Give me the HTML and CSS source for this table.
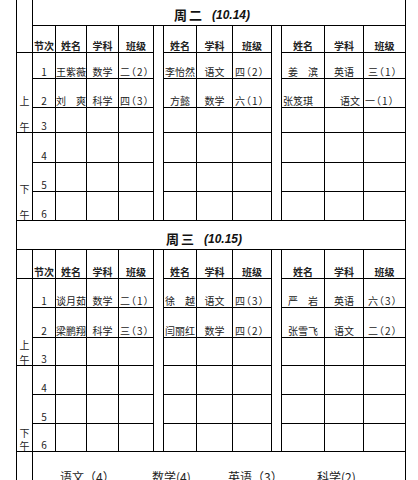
FILE: index.html
```html
<!DOCTYPE html>
<html lang="zh">
<head>
<meta charset="utf-8">
<title>课表</title>
<link rel="stylesheet" href="styles.css">
</head>
<body>
<div class="sheet">
  <div class="lt"></div>
  <div class="title t1"><span class="tz">周二</span><span class="td">(10.14)</span></div>
  <div class="gap g1a"></div><div class="gap g1b"></div>
  <div class="half am1"><span>上</span><span>午</span></div>
  <div class="half pm1"><span>下</span><span>午</span></div>

  <div class="c hd">节次</div><div class="c hd">姓名</div><div class="c hd">学科</div><div class="c hd">班级</div>
  <div class="c hd">姓名</div><div class="c hd">学科</div><div class="c hd">班级</div>
  <div class="c hd">姓名</div><div class="c hd">学科</div><div class="c hd">班级</div>

  <div class="c">1</div><div class="c">王紫薇</div><div class="c">数学</div><div class="c l cls">二（2）</div>
  <div class="c">李怡然</div><div class="c">语文</div><div class="c l l2 cls">四（2）</div>
  <div class="c">姜　滨</div><div class="c">英语</div><div class="c l l4 cls">三（1）</div>

  <div class="c">2</div><div class="c">刘　爽</div><div class="c">科学</div><div class="c l cls">四（3）</div>
  <div class="c">方懿</div><div class="c">数学</div><div class="c l l2 cls">六（1）</div>
  <div class="c l">张笈琪</div><div class="c r">语文</div><div class="c l cls">一（1）</div>

  <div class="c">3</div><div class="c"></div><div class="c"></div><div class="c"></div><div class="c"></div><div class="c"></div><div class="c"></div><div class="c"></div><div class="c"></div><div class="c"></div>
  <div class="c">4</div><div class="c"></div><div class="c"></div><div class="c"></div><div class="c"></div><div class="c"></div><div class="c"></div><div class="c"></div><div class="c"></div><div class="c"></div>
  <div class="c">5</div><div class="c"></div><div class="c"></div><div class="c"></div><div class="c"></div><div class="c"></div><div class="c"></div><div class="c"></div><div class="c"></div><div class="c"></div>
  <div class="c">6</div><div class="c"></div><div class="c"></div><div class="c"></div><div class="c"></div><div class="c"></div><div class="c"></div><div class="c"></div><div class="c"></div><div class="c"></div>

  <div class="title t2"><span class="tz">周三</span><span class="td">(10.15)</span></div>
  <div class="gap g2a"></div><div class="gap g2b"></div>
  <div class="half am2"><span>上</span><span>午</span></div>
  <div class="half pm2"><span>下</span><span>午</span></div>

  <div class="c"></div>
  <div class="c hd">节次</div><div class="c hd">姓名</div><div class="c hd">学科</div><div class="c hd">班级</div>
  <div class="c hd">姓名</div><div class="c hd">学科</div><div class="c hd">班级</div>
  <div class="c hd">姓名</div><div class="c hd">学科</div><div class="c hd">班级</div>

  <div class="c">1</div><div class="c">谈月茹</div><div class="c">数学</div><div class="c l cls">二（1）</div>
  <div class="c">徐　越</div><div class="c">语文</div><div class="c l l2 cls">四（3）</div>
  <div class="c">严　岩</div><div class="c">英语</div><div class="c l l4 cls">六（3）</div>

  <div class="c">2</div><div class="c">梁鹏翔</div><div class="c">科学</div><div class="c l cls">三（3）</div>
  <div class="c">闫丽红</div><div class="c">数学</div><div class="c l l2 cls">四（2）</div>
  <div class="c">张雪飞</div><div class="c">语文</div><div class="c l l4 cls">二（2）</div>

  <div class="c">3</div><div class="c"></div><div class="c"></div><div class="c"></div><div class="c"></div><div class="c"></div><div class="c"></div><div class="c"></div><div class="c"></div><div class="c"></div>
  <div class="c">4</div><div class="c"></div><div class="c"></div><div class="c"></div><div class="c"></div><div class="c"></div><div class="c"></div><div class="c"></div><div class="c"></div><div class="c"></div>
  <div class="c">5</div><div class="c"></div><div class="c"></div><div class="c"></div><div class="c"></div><div class="c"></div><div class="c"></div><div class="c"></div><div class="c"></div><div class="c"></div>
  <div class="c">6</div><div class="c"></div><div class="c"></div><div class="c"></div><div class="c"></div><div class="c"></div><div class="c"></div><div class="c"></div><div class="c"></div><div class="c"></div>

  <div class="c"></div>
  <div class="foot"><span class="fi">语文（4）</span><span class="fi">数学(4)</span><span class="fi">英语（3）</span><span class="fi">科学(2)</span></div>
</div>
</body>
</html>
```
FILE: styles.css
```css
html, body {
  margin: 0;
  padding: 0;
  background: #fff;
  overflow: hidden;
}
body {
  font-family: "Noto Sans CJK SC", "DejaVu Sans", sans-serif;
  color: #222;
}
.sheet {
  display: grid;
  margin-left: 16px;
  width: 388px;
  background: #000;
  padding: 0 1px 1px 1px;
  gap: 1px;
  grid-template-columns: 15px 22px 30px 31px 34px 9px 32px 35px 38px 9px 42px 38px 41px;
  grid-template-rows: 25px 26px 25px 28px 24px 29px 28px 28px 28px 28px 28px 29px 27px 28px 28px 27px 40px;
}
.sheet > div {
  background: #fff;
  min-width: 0;
}
.lt { grid-row: 1 / 3; grid-column: 1; }
.t1 { grid-row: 1; grid-column: 2 / 14; }
.t2 { grid-row: 9; grid-column: 1 / 14; }
.g1a { grid-row: 2 / 9; grid-column: 6; }
.g1b { grid-row: 2 / 9; grid-column: 10; }
.g2a { grid-row: 10 / 17; grid-column: 6; }
.g2b { grid-row: 10 / 17; grid-column: 10; }
.am1 { grid-row: 3 / 6; grid-column: 1; }
.pm1 { grid-row: 6 / 9; grid-column: 1; }
.am2 { grid-row: 11 / 14; grid-column: 1; }
.pm2 { grid-row: 14 / 17; grid-column: 1; }
.foot { grid-row: 17; grid-column: 2 / 14; }

.title {
  display: flex;
  justify-content: center;
  align-items: flex-end;
  padding-right: 14px;
  padding-bottom: 2px;
  font-weight: bold;
  line-height: 16px;
  color: #111;
}
.tz {
  font-size: 13px;
  letter-spacing: 2px;
}
.td {
  font-family: "Liberation Sans", Arial, sans-serif;
  font-style: italic;
  font-size: 12px;
  margin-left: 8px;
}
.c {
  display: flex;
  align-items: flex-end;
  justify-content: center;
  font-size: 10px;
  line-height: 12px;
  white-space: nowrap;
  overflow: hidden;
}
.hd {
  font-weight: bold;
}
.l {
  justify-content: flex-start;
  padding-left: 1px;
}
.l2 { padding-left: 2px; }
.l4 { padding-left: 4px; }
.r {
  justify-content: flex-end;
  padding-right: 3px;
}
.cls {
  font-feature-settings: "halt";
  letter-spacing: 1px;
}
.half {
  display: flex;
  flex-direction: column;
  align-items: center;
  justify-content: flex-end;
  font-size: 10px;
  line-height: 11px;
}
.am1, .pm1 { gap: 15px; }
.am2 { gap: 4px; }
.pm2 { gap: 2px; }
.foot {
  display: flex;
  align-items: flex-start;
  padding: 17px 0 0 27px;
  font-size: 12px;
  line-height: 16px;
  white-space: nowrap;
}
.fi:nth-child(1) { width: 92px; }
.fi:nth-child(2) { width: 76px; }
.fi:nth-child(3) { width: 89px; }
```
